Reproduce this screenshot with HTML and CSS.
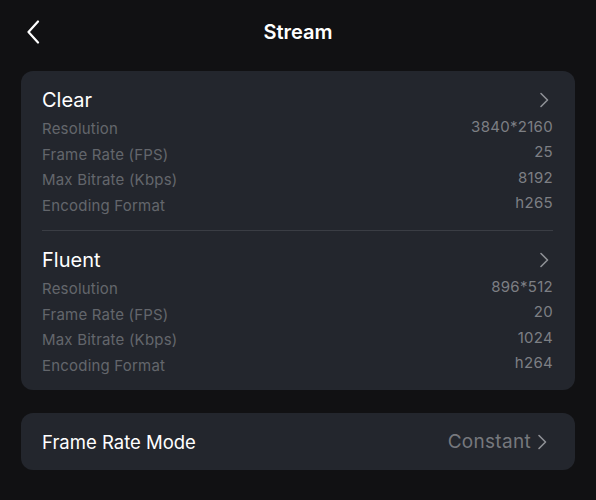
FILE: index.html
```html
<!DOCTYPE html>
<html lang="en">

<head>
    <meta charset="UTF-8">
    <meta name="viewport" content="width=device-width, initial-scale=1.0">
    <title>Stream</title>
    <link rel="stylesheet" href="styles.css">
</head>

<body>
    <header class="topbar">
        <a class="back" href="#">
            <svg width="14" height="24" viewBox="0 0 14 24">
                <path d="M12 1.5 L2.5 12 L12 22.5" fill="none" stroke="#fff" stroke-width="2.2" stroke-linecap="round" stroke-linejoin="round" />
            </svg>
        </a>
        <h1 class="title">Stream</h1>
        <span></span>
    </header>

    <main class="content">
        <div class="card">
            <section class="stream">
                <div class="stream-head">
                    <span>Clear</span>
                    <svg class="chevron" width="10" height="16" viewBox="0 0 10 16">
                        <path d="M2 1.5 L8.5 8 L2 14.5" fill="none" stroke="#8e9095" stroke-width="1.6" stroke-linecap="round" stroke-linejoin="round" />
                    </svg>
                </div>
                <div class="row"><span class="label">Resolution</span><span class="value">3840*2160</span></div>
                <div class="row"><span class="label">Frame Rate (FPS)</span><span class="value">25</span></div>
                <div class="row"><span class="label">Max Bitrate (Kbps)</span><span class="value">8192</span></div>
                <div class="row"><span class="label">Encoding Format</span><span class="value">h265</span></div>
            </section>
            <hr class="divider">
            <section class="stream">
                <div class="stream-head">
                    <span>Fluent</span>
                    <svg class="chevron" width="10" height="16" viewBox="0 0 10 16">
                        <path d="M2 1.5 L8.5 8 L2 14.5" fill="none" stroke="#8e9095" stroke-width="1.6" stroke-linecap="round" stroke-linejoin="round" />
                    </svg>
                </div>
                <div class="row"><span class="label">Resolution</span><span class="value">896*512</span></div>
                <div class="row"><span class="label">Frame Rate (FPS)</span><span class="value">20</span></div>
                <div class="row"><span class="label">Max Bitrate (Kbps)</span><span class="value">1024</span></div>
                <div class="row"><span class="label">Encoding Format</span><span class="value">h264</span></div>
            </section>
        </div>

        <div class="card mode">
            <span class="mode-label">Frame Rate Mode</span>
            <span class="mode-value">
                Constant
                <svg width="10" height="16" viewBox="0 0 10 16">
                    <path d="M2 1.5 L8.5 8 L2 14.5" fill="none" stroke="#8e9095" stroke-width="1.6" stroke-linecap="round" stroke-linejoin="round" />
                </svg>
            </span>
        </div>
    </main>
</body>

</html>
```

FILE: styles.css
```css
body {
    margin: 0;
    background-color: #111113;
    color: #ffffff;
    font-family: Inter, "Noto Sans", sans-serif;
}

.topbar {
    display: grid;
    grid-template-columns: 60px 1fr 60px;
    align-items: center;
    height: 64px;
}

.back {
    display: flex;
    padding-left: 26px;
}

.title {
    margin: 0;
    text-align: center;
    font-size: 20px;
    font-weight: 600;
}

.content {
    padding: 7px 21px;
}

.card {
    background-color: #23262d;
    border-radius: 12px;
    padding: 0 22px 0 21px;
}

.stream {
    padding: 15px 0 12px;
}

.stream:last-child {
    padding-bottom: 12px;
}

.stream-head {
    display: flex;
    justify-content: space-between;
    align-items: center;
    height: 28px;
    margin-bottom: 2px;
    font-size: 20px;
}

.chevron {
    margin-right: 4px;
}

.row {
    display: flex;
    justify-content: space-between;
    align-items: center;
    height: 25.5px;
    font-size: 15px;
}

.label {
    color: #63666c;
    letter-spacing: 0.2px;
}

.value {
    color: #7d7f84;
    letter-spacing: 0.3px;
    margin-bottom: 5px;
}

.divider {
    margin: 0;
    border: none;
    border-top: 1px solid #3a3d44;
}

.mode {
    display: flex;
    justify-content: space-between;
    align-items: center;
    height: 57px;
    margin-top: 23px;
}

.mode-label {
    font-size: 18.5px;
}

.mode-value {
    display: flex;
    align-items: center;
    gap: 6px;
    color: #76787d;
    font-size: 19px;
    letter-spacing: 0.3px;
    margin-right: 6px;
}
```
